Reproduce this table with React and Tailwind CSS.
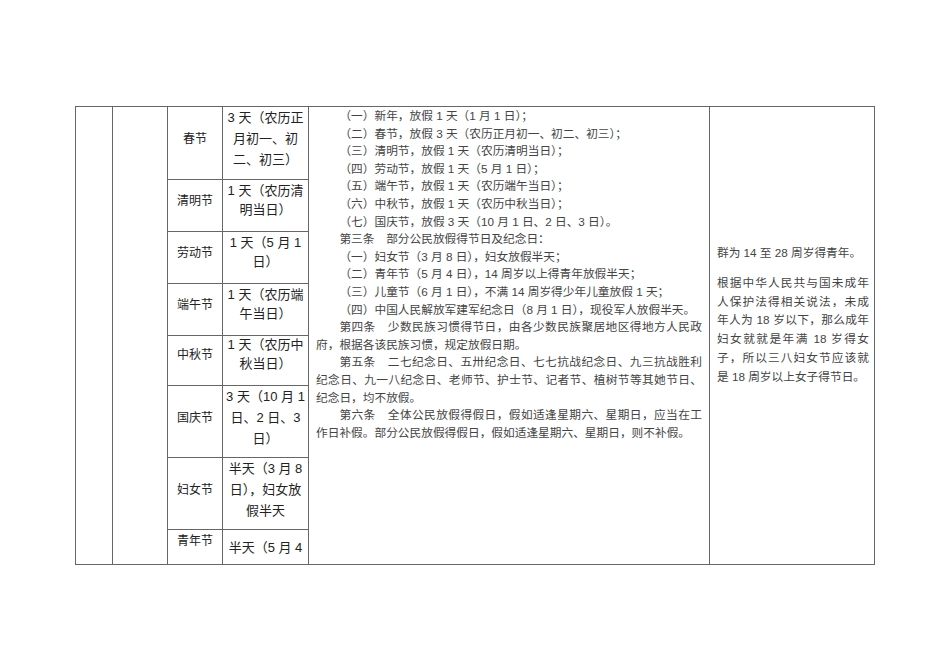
import React from "react"

const rows = [
  { name: "春节", lines: ["3 天（农历正", "月初一、初", "二、初三）"], row: "h-[73px] border-b", day: "leading-[21px]", box: "h-[63px]" },
  { name: "清明节", lines: ["1 天（农历清", "明当日）"], row: "h-[52px] border-b", day: "pt-[2px] leading-[18.5px]", box: "mt-[2px] h-[37px]" },
  { name: "劳动节", lines: ["1 天（5 月 1", "日）"], row: "h-[52px] border-b", day: "pt-[2px] leading-[18.5px]", box: "mt-[2px] h-[37px]" },
  { name: "端午节", lines: ["1 天（农历端", "午当日）"], row: "h-[52px] border-b", day: "pt-[2px] leading-[18.5px]", box: "mt-[2px] h-[37px]" },
  { name: "中秋节", lines: ["1 天（农历中", "秋当日）"], row: "h-[50px] border-b", day: "leading-[18.5px]", box: "h-[37px]" },
  { name: "国庆节", lines: ["3 天（10 月 1", "日、2 日、3", "日）"], row: "h-[72px] border-b", day: "leading-[21px]", box: "h-[63px]" },
  { name: "妇女节", lines: ["半天（3 月 8", "日），妇女放", "假半天"], row: "h-[72px] border-b", day: "leading-[21px]", box: "h-[63px]" },
  { name: "青年节", lines: ["半天（5 月 4"], row: "flex-1", day: "pt-[9px] leading-[18px]", box: "mt-[2px] h-[18px]" },
]

// middle column, one entry per printed line
const articles = [
  { t: "（一）新年，放假 1 天（1 月 1 日）；", c: "pl-[23.4px]" },
  { t: "（二）春节，放假 3 天（农历正月初一、初二、初三）；", c: "pl-[23.4px]" },
  { t: "（三）清明节，放假 1 天（农历清明当日）；", c: "pl-[23.4px]" },
  { t: "（四）劳动节，放假 1 天（5 月 1 日）；", c: "pl-[23.4px]" },
  { t: "（五）端午节，放假 1 天（农历端午当日）；", c: "pl-[23.4px]" },
  { t: "（六）中秋节，放假 1 天（农历中秋当日）；", c: "pl-[23.4px]" },
  { t: "（七）国庆节，放假 3 天（10 月 1 日、2 日、3 日）。", c: "pl-[23.4px]" },
  { t: "第三条　部分公民放假得节日及纪念日：", c: "pl-[23.4px]" },
  { t: "（一）妇女节（3 月 8 日），妇女放假半天；", c: "pl-[23.4px]" },
  { t: "（二）青年节（5 月 4 日），14 周岁以上得青年放假半天；", c: "pl-[23.4px]" },
  { t: "（三）儿童节（6 月 1 日），不满 14 周岁得少年儿童放假 1 天；", c: "pl-[23.4px]" },
  { t: "（四）中国人民解放军建军纪念日（8 月 1 日），现役军人放假半天。", c: "pl-[23.4px]" },
  { t: "第四条　少数民族习惯得节日，由各少数民族聚居地区得地方人民政", c: "pl-[23.4px] [text-align-last:justify]" },
  { t: "府，根据各该民族习惯，规定放假日期。", c: "" },
  { t: "第五条　二七纪念日、五卅纪念日、七七抗战纪念日、九三抗战胜利", c: "pl-[23.4px] [text-align-last:justify]" },
  { t: "纪念日、九一八纪念日、老师节、护士节、记者节、植树节等其她节日、", c: "[text-align-last:justify]" },
  { t: "纪念日，均不放假。", c: "" },
  { t: "第六条　全体公民放假得假日，假如适逢星期六、星期日，应当在工", c: "pl-[23.4px] [text-align-last:justify]" },
  { t: "作日补假。部分公民放假得假日，假如适逢星期六、星期日，则不补假。", c: "" },
]

const notes = [
  { t: "根据中华人民共与国未成年", j: true },
  { t: "人保护法得相关说法，未成", j: true },
  { t: "年人为 18 岁以下，那么成年", j: true },
  { t: "妇女就就是年满 18 岁得女", j: true },
  { t: "子，所以三八妇女节应该就", j: true },
  { t: "是 18 周岁以上女子得节日。", j: false },
]

const App = () => {
  return (
    <div className="min-h-screen w-full bg-white pl-[75px] pt-[106px] font-['Liberation_Sans','Noto_Sans_CJK_SC',sans-serif]">
      <div className="flex h-[459px] w-[800px] border border-[#666]">
        <div className="w-[37px] shrink-0 border-r border-[#666]" />
        <div className="w-[55px] shrink-0 border-r border-[#666]" />

        <div className="flex w-[141px] shrink-0 flex-col">
          {rows.map((r) => (
            <div key={r.name} className={`flex border-[#666] ${r.row}`}>
              <div className="w-[55px] shrink-0 border-r border-[#666]">
                <div className={`flex items-center justify-center text-[12px] text-[#222] ${r.box}`}>{r.name}</div>
              </div>
              <div className={`w-[86px] shrink-0 overflow-hidden border-r border-[#666] text-center text-[13px] text-[#222] ${r.day}`}>
                {r.lines.map((l) => <div key={l} className="whitespace-nowrap">{l}</div>)}
              </div>
            </div>
          ))}
        </div>

        <div className="w-[401px] shrink-0 border-r border-[#666] px-[7px] text-[11.7px] leading-[17.6px] text-[#444]">
          {articles.map((a) => (
            <div key={a.t} className={`whitespace-nowrap text-left ${a.c}`}>{a.t}</div>
          ))}
        </div>

        <div className="flex-1 pl-[7px] pr-[5px] pt-[137px] text-[11.7px] leading-[18.8px] text-[#444]">
          <div className="whitespace-nowrap">群为 14 至 28 周岁得青年。</div>
          <div className="mt-[11px]">
            {notes.map((n) => (
              <div key={n.t} className={`whitespace-nowrap ${n.j ? "[text-align-last:justify]" : "text-left"}`}>{n.t}</div>
            ))}
          </div>
        </div>
      </div>
    </div>
  )
}

export default App
